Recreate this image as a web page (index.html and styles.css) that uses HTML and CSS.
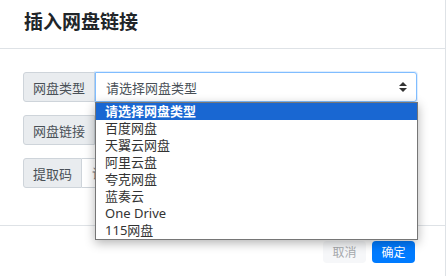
FILE: index.html
```html
<!DOCTYPE html>
<html lang="zh">
<head>
<meta charset="utf-8">
<link rel="stylesheet" href="styles.css">
</head>
<body>
<div class="modal">
  <div class="modal-header">
    <h5 class="modal-title">插入网盘链接</h5>
  </div>
  <div class="modal-body">
    <div class="group">
      <span class="addon">网盘类型</span>
      <div class="select-wrap">
        <div class="select">
          <span>请选择网盘类型</span>
          <svg class="arrows" width="8" height="12" viewBox="0 0 8 12"><polygon points="0,5 4,1 8,5" fill="#333"/><polygon points="0,7 4,11 8,7" fill="#333"/></svg>
        </div>
        <ul class="dropdown">
          <li class="active">请选择网盘类型</li>
          <li>百度网盘</li>
          <li>天翼云网盘</li>
          <li>阿里云盘</li>
          <li>夸克网盘</li>
          <li>蓝奏云</li>
          <li>One Drive</li>
          <li>115网盘</li>
        </ul>
      </div>
    </div>
    <div class="group">
      <span class="addon">网盘链接</span>
      <input class="control" placeholder="请输入网盘链接">
    </div>
    <div class="group">
      <span class="addon">提取码</span>
      <input class="control" placeholder="请输入提取码">
    </div>
  </div>
  <div class="modal-footer">
    <button class="btn btn-light">取消</button>
    <button class="btn btn-primary">确定</button>
  </div>
</div>
</body>
</html>
```

FILE: styles.css
```css
* { box-sizing: border-box; }
body {
  margin: 0;
  background: #fff;
  font-family: "Noto Sans", "Noto Sans CJK SC", sans-serif;
  color: #212529;
}
.modal {
  width: 446px;
  height: 276px;
  border-right: 1px solid #dee2e6;
  background: #fff;
}
.modal-header {
  height: 49px;
  border-bottom: 1px solid #dee2e6;
  display: flex;
  align-items: center;
  padding: 0 24px;
}
.modal-title {
  margin: 0 0 3px 0;
  font-size: 19px;
  font-weight: 700;
  color: #212529;
  line-height: 1;
}
.modal-body {
  padding: 23px 28px 37px 23px;
  display: flex;
  flex-direction: column;
  gap: 13px;
}
.group {
  display: flex;
  height: 30px;
}
.addon {
  display: flex;
  align-items: center;
  padding: 0 9px;
  background: #e9ecef;
  border: 1px solid #ced4da;
  border-radius: 3px 0 0 3px;
  font-size: 13px;
  color: #495057;
  white-space: nowrap;
}
.select-wrap {
  position: relative;
  flex: 1;
}
.select {
  height: 30px;
  display: flex;
  align-items: center;
  justify-content: space-between;
  padding: 0 9px 0 10px;
  border: 1px solid #80bdff;
  border-radius: 0 3px 3px 0;
  font-size: 13px;
  color: #495057;
  background: #fff;
  box-shadow: 0 0 0 1px rgba(128, 189, 255, 0.25);
}
.control {
  flex: 1;
  height: 30px;
  border: 1px solid #ced4da;
  border-left: 0;
  border-radius: 0 3px 3px 0;
  padding: 0 10px;
  font-family: inherit;
  font-size: 13px;
  color: #495057;
}
.control::placeholder { color: #6c757d; }
.dropdown {
  position: absolute;
  left: 0;
  top: 100%;
  width: 323px;
  margin: 0;
  padding: 0;
  list-style: none;
  background: #fff;
  border: 1px solid #767676;
  box-shadow: 0 3px 10px rgba(0, 0, 0, 0.3);
  z-index: 10;
}
.dropdown li {
  height: 17px;
  line-height: 17px;
  padding-left: 9px;
  font-size: 13px;
  color: #333;
  white-space: nowrap;
}
.dropdown li.active {
  background: #1967d2;
  color: #fff;
  font-weight: 700;
}
.modal-footer {
  border-top: 1px solid #dee2e6;
  display: flex;
  justify-content: flex-end;
  gap: 6px;
  padding: 15px 30px 0 0;
}
.btn {
  width: 43px;
  height: 22px;
  border: 0;
  border-radius: 4px;
  font-family: inherit;
  font-size: 12px;
  padding: 0;
}
.btn-light {
  background: #f6f7f9;
  color: #a6a9ad;
}
.btn-primary {
  background: #007bff;
  color: #fff;
}
```
